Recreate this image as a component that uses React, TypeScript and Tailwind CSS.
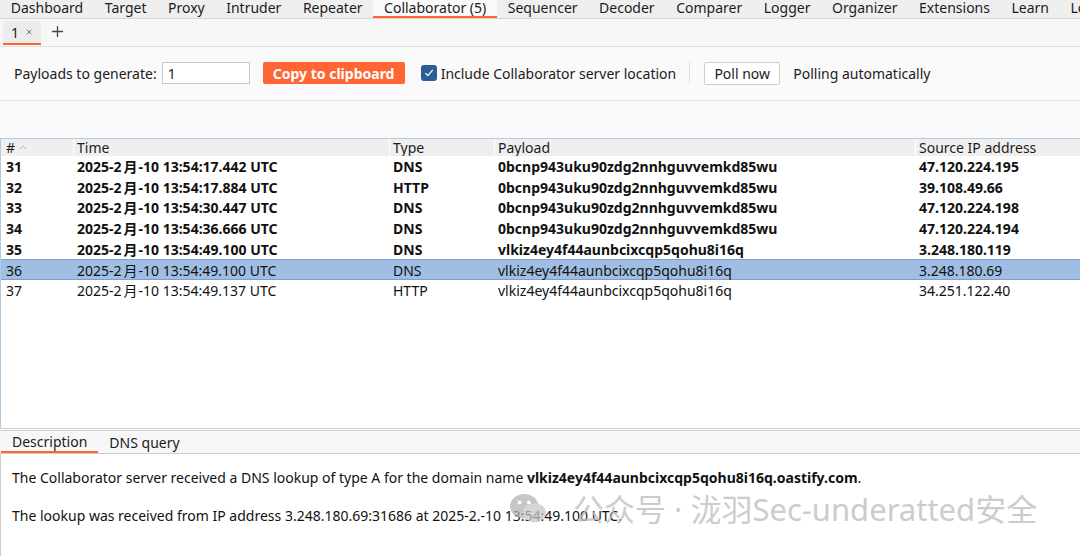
import { Plus, X } from "lucide-react";

const font = { fontFamily: '"Noto Sans", "Noto Sans CJK SC", sans-serif' };

const topTabs = [
  "Dashboard",
  "Target",
  "Proxy",
  "Intruder",
  "Repeater",
  "Collaborator (5)",
  "Sequencer",
  "Decoder",
  "Comparer",
  "Logger",
  "Organizer",
  "Extensions",
  "Learn",
  "Logger++",
];

type Row = { n: number; time: string; type: string; payload: string; ip: string; bold: boolean };

const rows: Row[] = [
  { n: 31, time: "2025-2月-10 13:54:17.442 UTC", type: "DNS", payload: "0bcnp943uku90zdg2nnhguvvemkd85wu", ip: "47.120.224.195", bold: true },
  { n: 32, time: "2025-2月-10 13:54:17.884 UTC", type: "HTTP", payload: "0bcnp943uku90zdg2nnhguvvemkd85wu", ip: "39.108.49.66", bold: true },
  { n: 33, time: "2025-2月-10 13:54:30.447 UTC", type: "DNS", payload: "0bcnp943uku90zdg2nnhguvvemkd85wu", ip: "47.120.224.198", bold: true },
  { n: 34, time: "2025-2月-10 13:54:36.666 UTC", type: "DNS", payload: "0bcnp943uku90zdg2nnhguvvemkd85wu", ip: "47.120.224.194", bold: true },
  { n: 35, time: "2025-2月-10 13:54:49.100 UTC", type: "DNS", payload: "vlkiz4ey4f44aunbcixcqp5qohu8i16q", ip: "3.248.180.119", bold: true },
  { n: 36, time: "2025-2月-10 13:54:49.100 UTC", type: "DNS", payload: "vlkiz4ey4f44aunbcixcqp5qohu8i16q", ip: "3.248.180.69", bold: false },
  { n: 37, time: "2025-2月-10 13:54:49.137 UTC", type: "HTTP", payload: "vlkiz4ey4f44aunbcixcqp5qohu8i16q", ip: "34.251.122.40", bold: false },
];

const cols = "grid grid-cols-[72px_316px_105px_421px_1fr]";

function TopBar() {
  return (
    <div className="flex h-[19px] shrink-0 overflow-hidden border-b border-[#d6d6d6] bg-[#efefef] text-[14px] leading-[15px] text-[#1c1c1c]">
      {topTabs.map((t) => {
        const active = t.startsWith("Collaborator");
        return (
          <div
            key={t}
            className={
              active
                ? "shrink-0 whitespace-nowrap border-b-2 border-[#ff6633] bg-[#fafafa] px-[10.75px]"
                : "shrink-0 whitespace-nowrap px-[10.75px]"
            }
          >
            {t}
          </div>
        );
      })}
    </div>
  );
}

function SubTabs() {
  return (
    <div className="flex h-[28px] shrink-0 items-end gap-[8px] border-b border-[#dedede] bg-[#f7f7f7] pl-[3px]">
      <div className="mb-[1px] flex h-[24px] items-center gap-[6px] rounded-t-[3px] border-b-2 border-[#ff6633] bg-[#ececec] px-[8px] text-[14px] text-[#1c1c1c]">
        <span>1</span>
        <X className="h-[8px] w-[8px] text-[#777]" strokeWidth={3} />
      </div>
      <Plus className="mb-[6px] h-[17px] w-[17px] text-[#444]" strokeWidth={1.8} />
    </div>
  );
}

function Toolbar() {
  return (
    <div className="flex h-[54px] shrink-0 items-center border-b border-[#e2e2e2] bg-[#fafafa] pb-[1px] pl-[14px] text-[14px] text-[#1c1c1c]">
      <span>Payloads to generate:</span>
      <div className="ml-[5px] flex h-[22px] w-[88px] items-center border border-[#c9c9c9] bg-white pl-[5px]">1</div>
      <button className="ml-[13px] h-[22px] w-[142px] rounded-[2px] bg-[#ff6633] text-[14px] font-bold text-white">
        Copy to clipboard
      </button>
      <div className="ml-[16px] flex h-[16px] w-[16px] items-center justify-center rounded-[3px] bg-[#2b5d96]">
        <svg viewBox="0 0 16 16" className="h-[12px] w-[12px]">
          <path d="M3.5 8.5 L6.5 11.5 L12.5 4.5" fill="none" stroke="white" strokeWidth="1.8" strokeLinecap="round" strokeLinejoin="round" />
        </svg>
      </div>
      <span className="ml-[4px]">Include Collaborator server location</span>
      <div className="ml-[13px] h-[22px] w-px bg-[#e0e0e0]" />
      <button className="ml-[14px] h-[23px] w-[76px] rounded-[2px] border border-[#cfcfcf] bg-white text-[14px] text-[#1c1c1c]">
        Poll now
      </button>
      <span className="ml-[13px]">Polling automatically</span>
    </div>
  );
}

function Time({ t }: { t: string }) {
  const [a, b] = t.split("月");
  return (
    <>
      {a}
      <span className="pl-[2px] pr-[1px]">月</span>
      {b}
    </>
  );
}

function Table() {
  return (
    <div className="flex min-h-0 flex-1 flex-col border-l border-t border-[#aecbe8] bg-white text-[14px] text-[#111]">
      <div className={`${cols} h-[17px] shrink-0 overflow-hidden bg-[#efefef] leading-[17px] text-[#1c1c1c]`}>
        <div className="flex items-center gap-[4px] pl-[5px]">
          #
          <svg viewBox="0 0 10 6" className="h-[5px] w-[8px]">
            <path d="M1 5 L5 1 L9 5" fill="none" stroke="#aaa" strokeWidth="1" />
          </svg>
        </div>
        <div className="border-l border-white pl-[3px]">Time</div>
        <div className="border-l border-white pl-[3px]">Type</div>
        <div className="border-l border-white pl-[3px]">Payload</div>
        <div className="border-l border-white pl-[3px]">Source IP address</div>
      </div>
      {rows.map((r) => (
        <div
          key={r.n}
          className={`${cols} h-[20.67px] shrink-0 items-center whitespace-nowrap ${r.bold ? "font-bold" : ""} ${
            r.n === 36 ? "border-y border-[#7c9fcb] bg-[#a0bee3]" : ""
          }`}
        >
          <div className="pl-[5px]">{r.n}</div>
          <div className="pl-[4px]">
            <Time t={r.time} />
          </div>
          <div className="pl-[4px]">{r.type}</div>
          <div className="pl-[4px]">{r.payload}</div>
          <div className="pl-[4px]">{r.ip}</div>
        </div>
      ))}
    </div>
  );
}

function Details() {
  return (
    <div className="flex h-[128px] shrink-0 flex-col border-t-[3px] border-double border-[#cfcfcf] text-[14px] text-[#111]">
      <div className="flex h-[23px] shrink-0 items-end border-b border-[#cccccc] bg-[#f7f7f7] pl-px text-[#1c1c1c]">
        <div className="flex h-[22px] items-center border-b-2 border-[#ff6633] px-[11px]">Description</div>
        <div className="flex h-[22px] items-center px-[11px]">DNS query</div>
      </div>
      <div className="relative flex-1 border-l border-[#cccccc] bg-white pl-[11px] pt-[14px]">
        <p className="leading-[20px]">
          The Collaborator server received a DNS lookup of type A for the domain name{" "}
          <span className="font-bold">vlkiz4ey4f44aunbcixcqp5qohu8i16q.oastify.com</span>.
        </p>
        <p className="mt-[18px] leading-[20px]">
          The lookup was received from IP address 3.248.180.69:31686 at 2025-2.-10 13:54:49.100 UTC.
        </p>
        <div className="pointer-events-none absolute left-[508px] top-[38px] flex items-center gap-[30px] text-[#bcbcbc] opacity-75">
          <svg viewBox="0 0 40 36" className="h-[34px] w-[38px]">
            <ellipse cx="16" cy="15" rx="15" ry="13" fill="#b4b4b4" />
            <ellipse cx="27" cy="22" rx="12" ry="10" fill="#c8c8c8" />
            <circle cx="11" cy="11" r="2" fill="#fff" />
            <circle cx="21" cy="11" r="2" fill="#fff" />
          </svg>
          <span className="-ml-[4px] whitespace-nowrap text-[31px] leading-[34px]">公众号 · 泷羽Sec-underatted安全</span>
        </div>
      </div>
    </div>
  );
}

export default function App() {
  return (
    <div className="flex h-[556px] w-[1080px] flex-col overflow-hidden bg-white" style={font}>
      <TopBar />
      <SubTabs />
      <Toolbar />
      <div className="h-[37px] shrink-0 bg-[#f9f9f9]" />
      <Table />
      <Details />
    </div>
  );
}
